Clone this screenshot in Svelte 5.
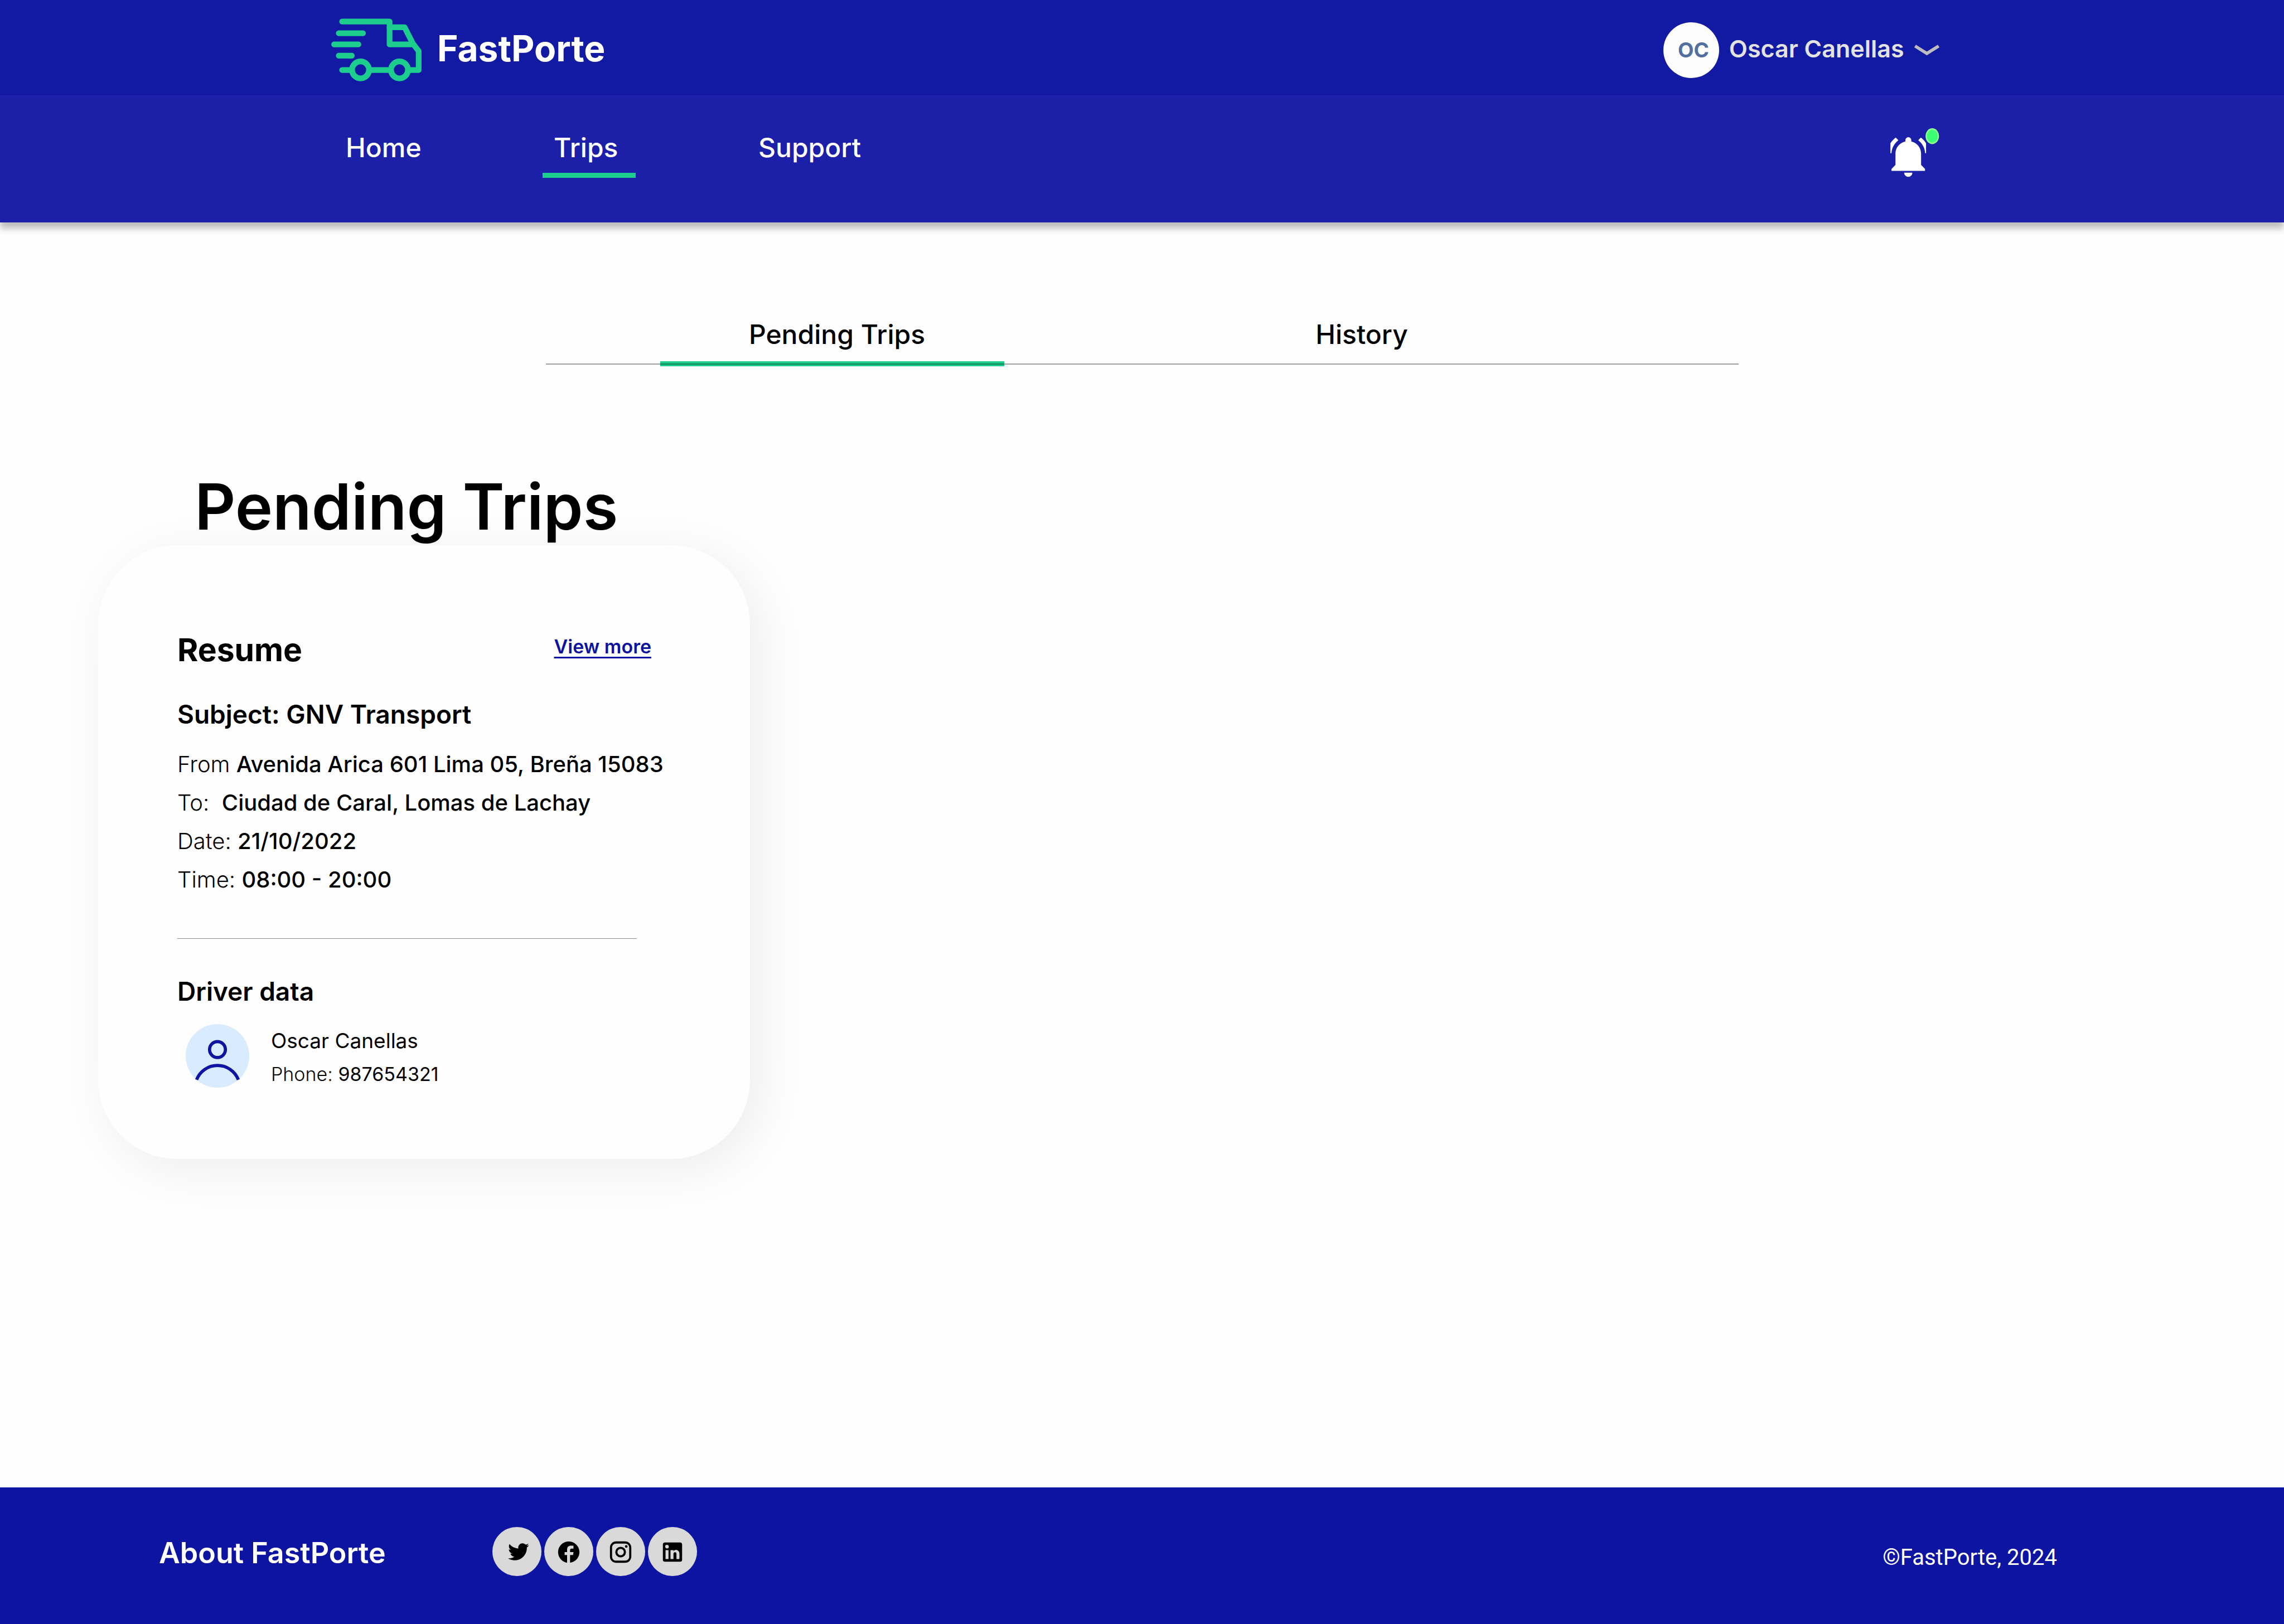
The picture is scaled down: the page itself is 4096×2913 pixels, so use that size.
<script>
  const links = [
    { label: 'Home', active: false },
    { label: 'Trips', active: true },
    { label: 'Support', active: false }
  ];

  let tab = $state('Pending Trips');
  const tabs = ['Pending Trips', 'History'];

  const details = [
    { label: 'From', value: 'Avenida Arica 601 Lima 05, Breña 15083' },
    { label: 'To:\u00a0', value: 'Ciudad de Caral, Lomas de Lachay' },
    { label: 'Date:', value: '21/10/2022' },
    { label: 'Time:', value: '08:00 - 20:00' }
  ];

  const socials = [
    {
      name: 'Twitter',
      box: '-2.4 0 25.6 25.6',
      path: 'M22.46,6C21.69,6.35 20.86,6.58 20,6.69C20.88,6.16 21.56,5.32 21.88,4.31C21.05,4.81 20.13,5.16 19.16,5.36C18.37,4.5 17.26,4 16,4C13.65,4 11.73,5.92 11.73,8.29C11.73,8.63 11.77,8.96 11.84,9.27C8.28,9.09 5.11,7.38 3,4.79C2.63,5.42 2.42,6.16 2.42,6.94C2.42,8.43 3.17,9.75 4.33,10.5C3.62,10.5 2.96,10.3 2.38,10V10.03C2.38,12.11 3.86,13.85 5.82,14.24C5.46,14.34 5.08,14.39 4.69,14.39C4.42,14.39 4.15,14.36 3.89,14.31C4.43,16 6,17.26 7.89,17.29C6.43,18.45 4.58,19.13 2.56,19.13C2.22,19.13 1.88,19.11 1.54,19.07C3.44,20.29 5.7,21 8.12,21C16,21 20.33,14.46 20.33,8.79C20.33,8.6 20.33,8.42 20.32,8.23C21.16,7.63 21.88,6.87 22.46,6Z'
    },
    {
      name: 'Facebook',
      box: '0 0 24 24',
      path: 'M12 2.04C6.5 2.04 2 6.53 2 12.06C2 17.06 5.66 21.21 10.44 21.96V14.7H8.1V12.06H10.44V9.85C10.44 7.34 11.73 6.06 14.22 6.06H16.4V8.7H14.7C13.6 8.7 13.2 9.39 13.2 10.18V12.06H16.45L16 14.7H13.2V21.96A10 10 0 0 0 22 12.06C22 6.53 17.5 2.04 12 2.04Z'
    },
    {
      name: 'Instagram',
      box: '0 0 24 24',
      path: 'M7.8,2H16.2C19.4,2 22,4.6 22,7.8V16.2A5.8,5.8 0 0,1 16.2,22H7.8C4.6,22 2,19.4 2,16.2V7.8A5.8,5.8 0 0,1 7.8,2M7.6,4A3.6,3.6 0 0,0 4,7.6V16.4C4,18.39 5.61,20 7.6,20H16.4A3.6,3.6 0 0,0 20,16.4V7.6C20,5.61 18.39,4 16.4,4H7.6M17.25,5.5A1.25,1.25 0 0,1 18.5,6.75A1.25,1.25 0 0,1 17.25,8A1.25,1.25 0 0,1 16,6.75A1.25,1.25 0 0,1 17.25,5.5M12,7A5,5 0 0,1 17,12A5,5 0 0,1 12,17A5,5 0 0,1 7,12A5,5 0 0,1 12,7M12,9A3,3 0 0,0 9,12A3,3 0 0,0 12,15A3,3 0 0,0 15,12A3,3 0 0,0 12,9Z'
    },
    {
      name: 'LinkedIn',
      box: '0 0 24 24',
      path: 'M19 3A2 2 0 0 1 21 5V19A2 2 0 0 1 19 21H5A2 2 0 0 1 3 19V5A2 2 0 0 1 5 3H19M18.5 18.5V13.2A3.26 3.26 0 0 0 15.24 9.94C14.39 9.94 13.4 10.46 12.92 11.24V10.13H10.13V18.5H12.92V13.57C12.92 12.8 13.54 12.17 14.31 12.17A1.4 1.4 0 0 1 15.71 13.57V18.5H18.5M6.88 8.56A1.68 1.68 0 0 0 8.56 6.88C8.56 5.95 7.81 5.19 6.88 5.19A1.69 1.69 0 0 0 5.19 6.88C5.19 7.81 5.95 8.56 6.88 8.56M8.27 18.5V10.13H5.5V18.5H8.27Z'
    }
  ];
</script>

<div class="page">
  <header>
    <div class="topbar">
      <a class="brand" href="#home">
        <svg class="truck" viewBox="0 0 228 159" aria-hidden="true">
          <g fill="none" stroke="currentColor" stroke-width="14.4" stroke-linecap="round" stroke-linejoin="round">
            <path d="M27.4 8H147.3V65.7H206" />
            <path d="M147.3 22.4H185.3L206 63.5L220.7 82.5V130.3H194" />
            <path d="M19 37.4H80.2M7.3 65.7H68.6M19 94.1H52M27.4 130.3H52M96 130.3H150" />
            <circle cx="74" cy="130" r="21.4" />
            <circle cx="172.3" cy="130" r="21.4" />
          </g>
        </svg>
        <span class="brand-name">FastPorte</span>
      </a>
      <button class="user" type="button">
        <span class="initials">OC</span>
        <span class="username">Oscar Canellas</span>
        <svg class="chevron" viewBox="0 0 64 28" aria-hidden="true">
          <path d="M2 3.5L32 22.5L62 3.5" fill="none" stroke="currentColor" stroke-width="8" />
        </svg>
      </button>
    </div>
    <div class="navbar">
      <nav>
        {#each links as link}
          <a class="navlink" class:active={link.active} href={'#' + link.label.toLowerCase()}>{link.label}</a>
        {/each}
      </nav>
      <button class="bell" type="button" aria-label="Notifications">
        <svg viewBox="0 0 124 124" aria-hidden="true">
          <g fill="#fff">
            <path d="M3 107.7V102.7L13 92.7V64C13 49 23.5 37 38 33.5V30.2A7.5 7.5 0 0 1 53 30.2V33.5C67.3 37 77.7 49 77.7 64V92.7L87.7 102.7V107.7Z" />
            <path d="M35 112.3H55.7A10.35 10.6 0 0 1 35 112.3Z" />
            <path d="M13.7 23.7L20.3 30.3C10 38.5 3.5 50 3 63H.3V38C4 32.5 8.5 27.5 13.7 23.7Z" />
            <path d="M77.2 23.7L70.6 30.3C80.9 38.5 87.4 50 87.9 63H90.3V38C86.9 32.5 82.4 27.5 77.2 23.7Z" />
          </g>
          <ellipse cx="106" cy="20" rx="17" ry="20" fill="#8dff8a" />
          <ellipse cx="106" cy="20" rx="13.5" ry="16" fill="#3dff74" />
        </svg>
      </button>
    </div>
  </header>

  <main>
    <div class="tabs" role="tablist">
      {#each tabs as name}
        <button
          type="button"
          role="tab"
          class="tab"
          class:selected={tab === name}
          aria-selected={tab === name}
          onclick={() => (tab = name)}>{name}</button>
      {/each}
    </div>

    <h1>Pending Trips</h1>

    <article class="card">
      <div class="card-head">
        <h2>Resume</h2>
        <a class="more" href="#details">View more</a>
      </div>
      <h3>Subject: GNV Transport</h3>
      <dl>
        {#each details as row}
          <div class="row"><dt>{row.label}</dt>{' '}<dd>{row.value}</dd></div>
        {/each}
      </dl>
      <hr />
      <h3>Driver data</h3>
      <div class="driver">
        <svg class="avatar" viewBox="0 0 160 160" aria-hidden="true">
          <circle cx="80" cy="80" r="80" fill="#d9ebff" />
          <g fill="none" stroke="#0d14a1" stroke-width="8">
            <circle cx="80" cy="64" r="20" />
            <path d="M27.5 140C36 118 57 104 80 104S124 118 132.5 140" />
          </g>
        </svg>
        <div>
          <p class="name">Oscar Canellas</p>
          <p class="phone"><span>Phone:</span> 987654321</p>
        </div>
      </div>
    </article>
  </main>

  <footer>
    <a class="about" href="#about">About FastPorte</a>
    <div class="socials">
      {#each socials as s}
        <a class="social" href={'#' + s.name.toLowerCase()} aria-label={s.name}>
          <svg viewBox={s.box} aria-hidden="true"><path d={s.path} /></svg>
        </a>
      {/each}
    </div>
    <p class="copyright">©FastPorte, 2024</p>
  </footer>
</div>

<style>
  :global(body) {
    margin: 0;
    background: #fefefe;
  }

  .page {
    display: flex;
    flex-direction: column;
    min-height: 100vh;
    font-family: Inter, "Liberation Sans", sans-serif;
    font-optical-sizing: none;
    color: #000;
  }

  .page *,
  .page {
    box-sizing: border-box;
  }

  svg {
    display: block;
    flex: none;
  }

  a {
    color: inherit;
    text-decoration: none;
  }

  button {
    margin: 0;
    padding: 0;
    border: 0;
    background: none;
    color: inherit;
    font: inherit;
    text-align: left;
    cursor: pointer;
  }

  h1,
  h2,
  h3,
  p,
  dl,
  dd {
    margin: 0;
  }

  header {
    color: #fff;
    box-shadow: 0 11px 11px rgba(0, 0, 0, 0.25);
  }

  .topbar {
    display: flex;
    align-items: center;
    justify-content: space-between;
    min-height: 171px;
    padding: 8px 15.1% 0 14.5%;
    background: #121aa3;
  }

  .brand {
    display: flex;
    align-items: center;
    gap: 28px;
    font-size: 64px;
    font-weight: 700;
    line-height: 76px;
  }

  .brand-name,
  .username {
    padding-bottom: 5px;
  }

  .truck {
    width: 162px;
    height: 113px;
    color: #1ccd8e;
  }

  .user {
    display: flex;
    align-items: center;
    gap: 18px;
    line-height: 52px;
  }

  .initials {
    display: grid;
    place-items: center;
    width: 100px;
    height: 100px;
    padding-left: 8px;
    border-radius: 50%;
    background: #fcfcfc;
    color: #51709f;
    font-size: 37px;
    font-weight: 700;
  }

  .username {
    color: #e3e3e3;
    font-size: 43px;
    font-weight: 600;
  }

  .chevron {
    width: 45px;
    height: 20px;
    color: #bdbdbd;
  }

  .navbar {
    display: flex;
    align-items: flex-start;
    justify-content: space-between;
    min-height: 228px;
    padding: 59px 15.1% 0 14.65%;
    background: #1c20a8;
  }

  nav {
    display: grid;
    grid-template-columns: 373px 367px auto;
    justify-items: start;
    padding-top: 4px;
  }

  .navlink,
  .tab {
    border-bottom: 9px solid transparent;
    font-size: 48px;
    font-weight: 500;
    line-height: 62px;
  }

  .navlink {
    padding: 0 32px 14px 20px;
  }

  .navlink.active,
  .tab.selected {
    border-color: #1ccd8e;
  }

  .bell svg {
    width: 88px;
    height: 88px;
  }

  main {
    flex: 1;
    padding: 170px 176px 160px;
  }

  .tabs {
    position: relative;
    display: flex;
    gap: 324px;
    width: 2139px;
    max-width: 100%;
    margin: 0 auto;
    padding-left: 205px;
  }

  .tabs::after {
    content: "";
    position: absolute;
    right: 0;
    bottom: 3px;
    left: 0;
    height: 2px;
    background: rgba(0, 0, 0, 0.38);
  }

  .tab {
    width: 617px;
    padding: 0 0 17px 18px;
    text-align: center;
  }

  h1 {
    position: relative;
    z-index: 1;
    margin-top: 183px;
    padding-left: 173px;
    font-size: 114px;
    font-weight: 600;
    line-height: 138px;
  }

  .card {
    width: 1169px;
    padding: 152px 177px 122px 142px;
    border-radius: 142px;
    background: #fefefe;
    box-shadow: 18px 18px 90px rgba(0, 0, 0, 0.07);
  }

  .card-head {
    display: flex;
    align-items: flex-start;
    justify-content: space-between;
    margin-bottom: 51px;
  }

  h2 {
    font-size: 57px;
    font-weight: 700;
    line-height: 72px;
  }

  .more {
    color: #0d14a1;
    font-size: 34px;
    font-weight: 600;
    line-height: 60px;
    text-decoration: underline;
    text-decoration-thickness: 3px;
    text-underline-offset: 6px;
  }

  h3 {
    font-size: 46px;
    font-weight: 600;
    line-height: 56px;
    white-space: nowrap;
  }

  dl {
    padding-top: 27px;
    font-size: 40px;
    line-height: 69px;
    white-space: nowrap;
  }

  dt,
  dd {
    display: inline;
  }

  dt {
    font-weight: 300;
  }

  dd {
    font-weight: 500;
  }

  hr {
    width: 824px;
    height: 1px;
    margin: 71px 0 66px;
    border: 0;
    background: #8c8c98;
  }

  .driver {
    display: flex;
    gap: 39px;
    padding: 31px 0 0 15px;
  }

  .avatar {
    width: 114px;
    height: 114px;
  }

  .name,
  .phone {
    font-weight: 400;
    line-height: 60px;
  }

  .name {
    font-size: 37px;
  }

  .phone {
    font-size: 34px;
  }

  .phone span {
    font-weight: 300;
  }

  footer {
    display: flex;
    align-items: flex-end;
    padding: 71px 407px 86px 285px;
    background: #0d14a1;
    color: #fff;
  }

  .about {
    font-size: 52px;
    font-weight: 600;
    line-height: 82px;
  }

  .socials {
    display: flex;
    gap: 5px;
    margin-left: 191px;
  }

  .social {
    display: grid;
    place-items: center;
    width: 88px;
    height: 88px;
    padding-top: 2px;
    border-radius: 50%;
    background: #d9d9d9;
    color: #000;
  }

  .social svg {
    width: 46px;
    height: 46px;
    fill: currentColor;
  }

  .copyright {
    margin-left: auto;
    font-family: Roboto, "Liberation Sans", sans-serif;
    font-size: 40px;
    line-height: 66px;
  }
</style>
